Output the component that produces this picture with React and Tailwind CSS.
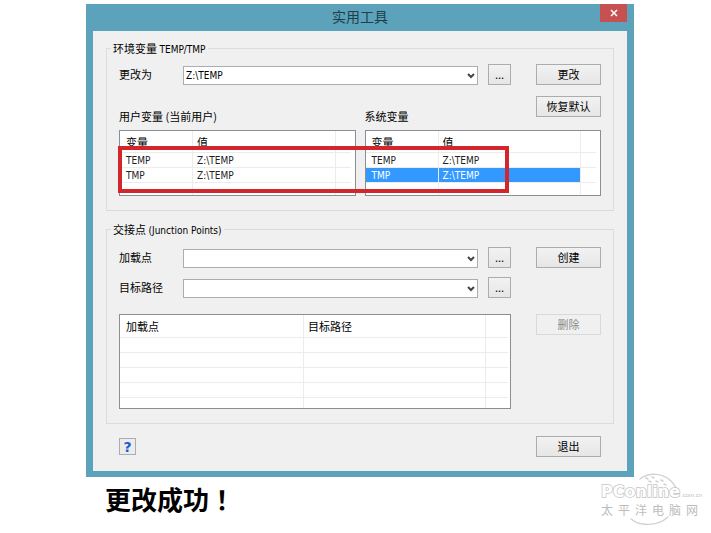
import { useState } from "react";

const fieldClass = "min-w-0 border border-[#dcdcdc] px-3";
const legendClass = "-ml-2 h-4 px-0.5 text-[11px] leading-4";
const lineClass = "border-r border-b border-[#ececec]";

const Latin = ({ children }) => (
  <span className="font-['DejaVu_Sans_Condensed','DejaVu_Sans',sans-serif] text-[10px]">
    {children}
  </span>
);

const Button = ({ children, disabled, className = "w-[65px]" }) => (
  <button
    type="button"
    disabled={disabled}
    className={`flex h-[21px] shrink-0 items-center justify-center border border-[#acacac] bg-linear-to-b from-[#f2f2f2] to-[#e6e6e6] pb-0.5 text-[11px] leading-4 disabled:border-[#d9d9d9] disabled:bg-none disabled:text-[#8a8a8a] ${className}`}
  >
    {children}
  </button>
);

const PathRow = ({ id, label, value }) => (
  <div className="flex h-[21px] items-end">
    <label htmlFor={id} className="w-16 shrink-0 text-[11px] leading-[21px]">
      {label}
    </label>
    <div className="relative min-w-0 flex-1">
      <select
        id={id}
        defaultValue={value}
        className="block h-[19px] w-full appearance-none border border-[#abadb3] bg-white px-0.5 font-['DejaVu_Sans_Condensed','DejaVu_Sans',sans-serif] text-[10px]"
      >
        <option value={value}>{value}</option>
      </select>
      <svg
        viewBox="0 0 8 6"
        className="pointer-events-none absolute top-[7px] right-[3px] h-[6px] w-2"
        fill="none"
        stroke="#444"
        strokeWidth="2"
      >
        <path d="M1 1l3 3 3-3" />
      </svg>
    </div>
    <Button className="ml-2.5 w-[23px]">...</Button>
  </div>
);

const VariableTable = ({ label, rows, selected, onSelect }) => (
  <div className="h-[66px] overflow-hidden border border-[#8a8d93] bg-white pr-1">
    <table aria-label={label} className="w-full table-fixed border-separate border-spacing-0 text-left">
      <colgroup>
        <col className="w-[73px]" />
        <col />
        <col className="w-[15px]" />
      </colgroup>
      <thead>
        <tr className="h-[22px] text-[11px] leading-4">
          <th className={`${lineClass} p-0 pl-1.5 font-normal`}>变量</th>
          <th className={`${lineClass} p-0 pl-1 font-normal`}>值</th>
          <th className="border-b border-[#ececec] p-0"></th>
        </tr>
      </thead>
      <tbody>
        {rows.map((row) => {
          const active = row.name === selected;
          const cell = active ? "bg-[#3399ff] text-white" : "text-[#222]";
          return (
            <tr key={row.name} onClick={() => onSelect(row.name)} className="h-[15px] leading-[13px]">
              <td className={`${lineClass} ${cell} p-0 pl-1.5 text-[10px]`}>
                <Latin>{row.name}</Latin>
              </td>
              <td className={`${lineClass} ${cell} p-0 pl-1 text-[10px]`}>
                <Latin>{row.value}</Latin>
              </td>
              <td className="border-b border-[#ececec] p-0"></td>
            </tr>
          );
        })}
        <tr className="h-[13px]">
          <td className="border-r border-[#ececec] p-0"></td>
          <td className="border-r border-[#ececec] p-0"></td>
          <td className="p-0"></td>
        </tr>
      </tbody>
    </table>
  </div>
);

const JunctionTable = () => (
  <div className="h-[95px] overflow-hidden border border-[#8a8d93] bg-white pr-0.5">
    <table aria-label="交接点" className="w-full table-fixed border-separate border-spacing-0 text-left">
      <colgroup>
        <col className="w-[184px]" />
        <col />
        <col className="w-[22px]" />
      </colgroup>
      <thead>
        <tr className="h-[23px] text-[11px] leading-4">
          <th className={`${lineClass} p-0 pl-1.5 font-normal`}>加载点</th>
          <th className={`${lineClass} p-0 pl-1 font-normal`}>目标路径</th>
          <th className="border-b border-[#ececec] p-0"></th>
        </tr>
      </thead>
      <tbody>
        {[1, 2, 3, 4, 5].map((n) => (
          <tr key={n} className="h-[15px]">
            <td className={`${lineClass} p-0`}></td>
            <td className={`${lineClass} p-0`}></td>
            <td className="border-b border-[#ececec] p-0"></td>
          </tr>
        ))}
      </tbody>
    </table>
  </div>
);

const Watermark = () => (
  <svg viewBox="0 0 106 54" className="h-[54px] w-[106px] shrink-0" role="img" aria-label="PConline 太平洋电脑网">
    <g fill="none" stroke="#d2d2d2" strokeLinecap="round">
      <path d="M40 6C49 -1 63 0 71 8c4 4 6 8 7 13" strokeWidth="1.5" />
      <path d="M31 46c8 7 26 8 37-2" strokeWidth="1.5" />
      <path d="M46 5l2 1M52 4l2 1M49 8l2 1M56 8l2 1M61 7l2 1M64 11l2 1" strokeWidth="1.5" />
    </g>
    <text
      x="1"
      y="24"
      fontSize="16"
      fontWeight="700"
      fill="#fff"
      stroke="#c4c4c4"
      strokeWidth="1.5"
      paintOrder="stroke"
      className="font-['DejaVu_Sans',sans-serif]"
    >
      PConline
    </text>
    <text x="81" y="24" fontSize="6" fill="#c0c0c0" className="font-['Liberation_Sans',sans-serif]">
      .com.cn
    </text>
    <g fontSize="12" fill="#bdbdbd" className="font-['Noto_Sans_CJK_SC',sans-serif]">
      {["太", "平", "洋", "电", "脑", "网"].map((char, i) => (
        <text key={char} x={1 + i * 17} y="42">
          {char}
        </text>
      ))}
    </g>
  </svg>
);

const App = () => {
  const [userSelected, setUserSelected] = useState(null);
  const [systemSelected, setSystemSelected] = useState("TMP");

  const variables = [
    { name: "TEMP", value: "Z:\\TEMP" },
    { name: "TMP", value: "Z:\\TEMP" },
  ];

  return (
    <div className="min-h-screen bg-white pt-1 pr-[77px] pl-[86px] font-['Noto_Sans_CJK_SC',sans-serif] text-black">
      <main className="bg-[#5ba2ba] px-[7px] pb-[6px]">
        <header className="relative flex h-[27px] justify-center pt-0.5">
          <h1 className="text-[14px] leading-5 text-[#1f3f4b]">实用工具</h1>
          <button
            type="button"
            aria-label="关闭"
            className="absolute top-0 right-0 flex h-[18px] w-[27px] items-center justify-center bg-[#c75050]"
          >
            <svg viewBox="0 0 8 8" className="h-2 w-2" stroke="#fff" strokeWidth="1.5">
              <path d="M1 1l6 6M7 1L1 7" />
            </svg>
          </button>
        </header>

        <div className="bg-[#f0f0f0] px-[13px] pt-[9px] pb-3.5">
          <fieldset className={`${fieldClass} pb-3.5`}>
            <legend className={legendClass}>
              环境变量 <Latin>TEMP/TMP</Latin>
            </legend>
            <div className="mt-2 flex gap-[25px]">
              <div className="min-w-0 flex-1">
                <PathRow id="temp-path" label="更改为" value="Z:\TEMP" />
              </div>
              <Button>更改</Button>
            </div>

            <div className="relative mt-[11px] grid grid-cols-2 gap-[9px]">
              <section>
                <h2 className="flex h-[34px] items-end pb-[6px] text-[11px] leading-4">
                  用户变量 (当前用户)
                </h2>
                <VariableTable label="用户变量" rows={variables} selected={userSelected} onSelect={setUserSelected} />
              </section>
              <section>
                <div className="flex h-[34px] justify-between">
                  <h2 className="self-end pb-[6px] text-[11px] leading-4">系统变量</h2>
                  <Button>恢复默认</Button>
                </div>
                <VariableTable label="系统变量" rows={variables} selected={systemSelected} onSelect={setSystemSelected} />
              </section>
              {/* highlight over both variable lists */}
              <div className="pointer-events-none absolute top-[50px] right-[92px] -left-px h-[47px] border-4 border-[#d0262c]"></div>
            </div>
          </fieldset>

          <fieldset className={`${fieldClass} mt-2.5 pb-3.5`}>
            <legend className={legendClass}>
              交接点 <Latin>(Junction Points)</Latin>
            </legend>
            <div className="mt-2.5 flex gap-[25px]">
              <div className="flex min-w-0 flex-1 flex-col gap-[9px]">
                <PathRow id="mount-point" label="加载点" value="" />
                <PathRow id="target-path" label="目标路径" value="" />
              </div>
              <Button>创建</Button>
            </div>
            <div className="mt-4 flex gap-[25px]">
              <div className="min-w-0 flex-1">
                <JunctionTable />
              </div>
              <Button disabled>删除</Button>
            </div>
          </fieldset>

          <footer className="mt-3 flex items-center justify-between px-[13px]">
            <button
              type="button"
              aria-label="帮助"
              className="flex h-[17px] w-[17px] items-center justify-center border border-[#acacac] bg-[#ececec] font-['DejaVu_Sans',sans-serif] text-[14px] leading-4 font-bold text-[#1c5bd0]"
            >
              ?
            </button>
            <Button>退出</Button>
          </footer>
        </div>
      </main>

      <div className="-mt-1 -mr-[72px] flex items-start justify-between pl-[19px]">
        <p className="mt-2 text-[26px] leading-9 font-bold">
          更改成功<span lang="zh-TW" className="font-['Noto_Sans_CJK_TC',sans-serif]">！</span>
        </p>
        <Watermark />
      </div>
    </div>
  );
};

export default App;
